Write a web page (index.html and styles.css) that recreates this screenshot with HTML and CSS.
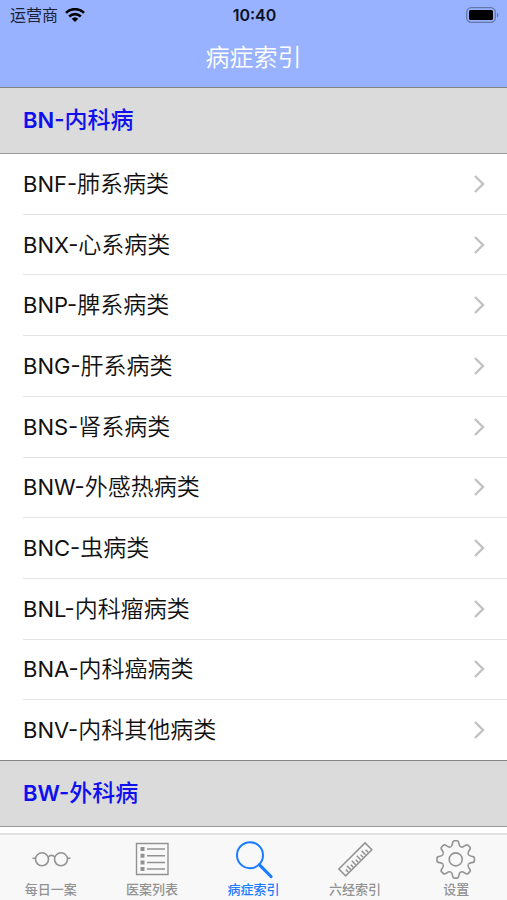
FILE: index.html
```html
<!DOCTYPE html>
<html lang="zh-CN">
<head>
<meta charset="utf-8">
<meta name="viewport" content="width=device-width, initial-scale=1">
<title>病症索引</title>
<link rel="stylesheet" href="styles.css">
</head>
<body>
<header class="top">
  <div class="status">
    <div class="carrier">
      <span>运营商</span>
      <svg width="20" height="14" viewBox="0 0 20 14" aria-hidden="true"><g fill="none" stroke="#000" stroke-width="2.7"><path d="M1 4.9a12.8 12.8 0 0 1 18 0"/><path d="M4.2 8.5a8.4 8.4 0 0 1 11.6 0"/></g><path d="M6.7 10.7a4.8 4.8 0 0 1 6.6 0L10 14z"/></svg>
    </div>
    <time class="clock">10:40</time>
    <svg class="battery" width="33" height="16" viewBox="0 0 33 16" aria-hidden="true"><rect x="0.7" y="0.7" width="28.6" height="14.6" rx="4.5" fill="none" stroke="#6478a8" stroke-width="1.3"/><rect x="3" y="3" width="24" height="10" rx="1.5"/><path d="M31 5.5q3 2.5 0 5z" fill="#6478a8"/></svg>
  </div>
  <h1 class="title">病症索引</h1>
</header>
<main class="content">
  <h2 class="section"><span class="code">BN-</span>内科病</h2>
  <ul class="list">
    <li><a href="#bnf"><span><span class="code">BNF-</span>肺系病类</span><svg class="chevron" viewBox="0 0 11 18"><path d="M1 1l8 8-8 8"/></svg></a></li>
    <li><a href="#bnx"><span><span class="code">BNX-</span>心系病类</span><svg class="chevron" viewBox="0 0 11 18"><path d="M1 1l8 8-8 8"/></svg></a></li>
    <li><a href="#bnp"><span><span class="code">BNP-</span>脾系病类</span><svg class="chevron" viewBox="0 0 11 18"><path d="M1 1l8 8-8 8"/></svg></a></li>
    <li><a href="#bng"><span><span class="code">BNG-</span>肝系病类</span><svg class="chevron" viewBox="0 0 11 18"><path d="M1 1l8 8-8 8"/></svg></a></li>
    <li><a href="#bns"><span><span class="code">BNS-</span>肾系病类</span><svg class="chevron" viewBox="0 0 11 18"><path d="M1 1l8 8-8 8"/></svg></a></li>
    <li><a href="#bnw"><span><span class="code">BNW-</span>外感热病类</span><svg class="chevron" viewBox="0 0 11 18"><path d="M1 1l8 8-8 8"/></svg></a></li>
    <li><a href="#bnc"><span><span class="code">BNC-</span>虫病类</span><svg class="chevron" viewBox="0 0 11 18"><path d="M1 1l8 8-8 8"/></svg></a></li>
    <li><a href="#bnl"><span><span class="code">BNL-</span>内科瘤病类</span><svg class="chevron" viewBox="0 0 11 18"><path d="M1 1l8 8-8 8"/></svg></a></li>
    <li><a href="#bna"><span><span class="code">BNA-</span>内科癌病类</span><svg class="chevron" viewBox="0 0 11 18"><path d="M1 1l8 8-8 8"/></svg></a></li>
    <li><a href="#bnv"><span><span class="code">BNV-</span>内科其他病类</span><svg class="chevron" viewBox="0 0 11 18"><path d="M1 1l8 8-8 8"/></svg></a></li>
  </ul>
  <h2 class="section"><span class="code">BW-</span>外科病</h2>
</main>
<nav class="tabs">
  <a href="#daily">
    <svg viewBox="0 0 40 40"><g stroke-width="1.6"><circle cx="11" cy="20.300" r="6.500"/><circle cx="30" cy="20.300" r="6.500"/><path d="M17 18q3.500-3.400 7 0M1.500 19.300h3M36.500 19.300H39.500"/></g></svg>
    <span>每日一案</span>
  </a>
  <a href="#cases">
    <svg viewBox="0 0 40 40"><path d="M4.500 4.500h31.500v31h-31.500z" stroke-width="1.400"/><path d="M15 10h18M15 16.700h18M15 23.400h18M15 30.100h18" stroke-width="1.500"/><path d="M8.500 10h4M8.500 16.700h4M8.500 23.400h4M8.500 30.100h4" stroke-width="4"/></svg>
    <span>医案列表</span>
  </a>
  <a href="#index" class="active" aria-current="page">
    <svg viewBox="0 0 40 40"><circle cx="16" cy="16.200" r="13" stroke-width="2"/><path d="M25.500 25.800L37 37.500" stroke-width="3.200" stroke-linecap="round"/></svg>
    <span>病症索引</span>
  </a>
  <a href="#meridian">
    <svg viewBox="0 0 40 40"><g transform="rotate(-45 20 20)" stroke-width="1.500"><path d="M1.500 15.700h37v9.600h-37z"/><path d="M6 24.500v-3.500M9.500 24.500v-5.500M13 24.500v-3.500M16.500 24.500v-5.500M20 24.500v-3.500M23.500 24.500v-5.500M27 24.500v-3.500M30.500 24.500v-5.500M34 24.500v-3.500"/></g></svg>
    <span>六经索引</span>
  </a>
  <a href="#settings">
    <svg viewBox="0 0 40 40"><defs><path id="tooth" d="M-5.200-12.500C-3.800-13-3.500-14-3.200-15.800C-2.900-18-2.500-18.700-1.500-18.700H1.500C2.500-18.700 2.900-18 3.200-15.800C3.500-14 3.800-13 5.200-12.500"/></defs><g transform="translate(19.700 20.400)" stroke-width="1.600"><circle r="6.500"/><use href="#tooth"/><use href="#tooth" transform="rotate(45)"/><use href="#tooth" transform="rotate(90)"/><use href="#tooth" transform="rotate(135)"/><use href="#tooth" transform="rotate(180)"/><use href="#tooth" transform="rotate(225)"/><use href="#tooth" transform="rotate(270)"/><use href="#tooth" transform="rotate(315)"/></g></svg>
    <span>设置</span>
  </a>
</nav>
</body>
</html>
```
FILE: styles.css
```css
* {
  box-sizing: border-box;
}

body {
  margin: 0;
  min-height: 100vh;
  display: flex;
  flex-direction: column;
  background: #fff;
  color: #111;
  font-family: Inter, "Noto Sans CJK SC", sans-serif;
}

a {
  color: inherit;
  text-decoration: none;
}

.top {
  height: 87px;
  background: #99b2ff;
}

.status {
  height: 30px;
  padding: 0 8px 0 10px;
  display: grid;
  grid-template-columns: 1fr auto 1fr;
  align-items: center;
}

.carrier {
  display: flex;
  align-items: center;
  gap: 7px;
  font-size: 16px;
  line-height: 24px;
  color: #1a2238;
}

.clock {
  font-size: 16px;
  line-height: 24px;
  font-weight: 600;
  color: #0b1020;
}

.battery {
  justify-self: end;
}

.title {
  margin: 0;
  font-size: 24px;
  line-height: 56px;
  font-weight: 350;
  text-align: center;
  color: #fff;
}

.content {
  flex: 1;
  display: flex;
  flex-direction: column;
  padding-bottom: 6px;
}

.section {
  height: 67px;
  margin: 0;
  padding: 0 23px;
  border-top: 1px solid #858585;
  border-bottom: 1px solid #999;
  background: #dbdbdb;
  color: #1010ee;
  font-size: 23px;
  line-height: 65px;
  font-weight: 500;
}

.code {
  font-size: 22px;
  font-weight: 400;
}

.section .code {
  font-weight: 600;
}

.list {
  flex: 1;
  display: flex;
  flex-direction: column;
  margin: 0;
  padding: 0 0 0 23px;
  list-style: none;
}

.list li {
  flex: 1;
  display: flex;
  border-bottom: 1px solid #e4e4e4;
}

.list li:last-child {
  border-bottom: 0;
}

.list a {
  flex: 1;
  display: flex;
  align-items: center;
  justify-content: space-between;
  padding-right: 22px;
  font-size: 23px;
  line-height: 32px;
  font-weight: 350;
}

.chevron {
  width: 11px;
  height: 18px;
  fill: none;
  stroke: #c2c2c5;
  stroke-width: 2.4;
}

.tabs {
  height: 67px;
  display: flex;
  border-top: 2px solid #e2e2e2;
  background: #f8f8f8;
  color: #929292;
}

.tabs a {
  flex: 1;
  display: flex;
  flex-direction: column;
  align-items: center;
  padding-top: 4px;
  font-size: 13px;
  line-height: 20px;
  font-weight: 500;
}

.tabs svg {
  width: 40px;
  height: 40px;
  fill: none;
  stroke: currentColor;
}

.tabs .active {
  color: #1a7dff;
}
```
